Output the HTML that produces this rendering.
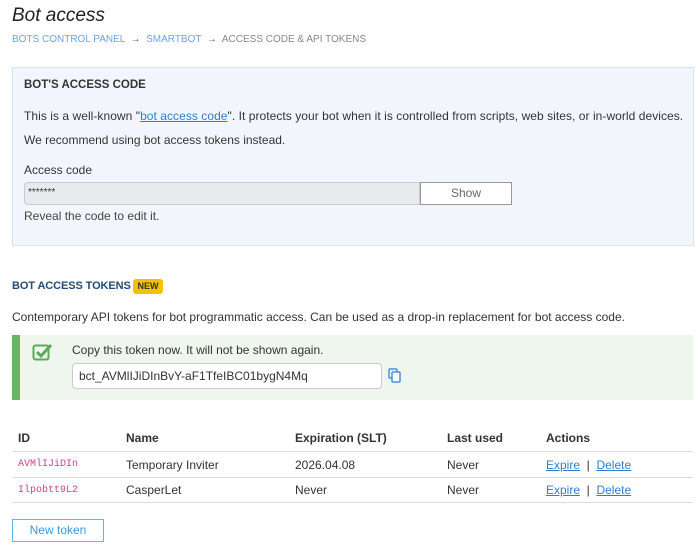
<!DOCTYPE html>
<html><head><style>
body{margin:0;width:700px;height:560px;background:#fff;font-family:"Liberation Sans",sans-serif;color:#333;font-size:12px;position:relative;overflow:hidden}
.a{position:absolute;white-space:nowrap}
a{color:#2a7fd4;text-decoration:underline}
.bc{font-size:10px;color:#6fa3dc}
</style></head><body>
<div class="a" style="left:12px;top:5px;font-size:19px;font-style:italic;color:#222">Bot access</div>
<div class="a bc" style="left:12px;top:34px">BOTS CONTROL PANEL <span style="color:#555">&nbsp;→&nbsp;</span> SMARTBOT <span style="color:#555">&nbsp;→&nbsp;</span> <span style="color:#888">ACCESS CODE &amp; API TOKENS</span></div>

<div class="a" style="left:12px;top:67px;width:680px;height:177px;background:#f2f6fc;border:1px solid #d4e5f5"></div>
<div class="a" style="left:24px;top:79px;font-weight:bold;font-size:11.5px;color:#333">BOT'S ACCESS CODE</div>
<div class="a" style="left:24px;top:109px;letter-spacing:0.05px">This is a well-known "<a>bot access code</a>". It protects your bot when it is controlled from scripts, web sites, or in-world devices.</div>
<div class="a" style="left:24px;top:133px">We recommend using bot access tokens instead.</div>
<div class="a" style="left:24px;top:163px;font-size:12px">Access code</div>
<div class="a" style="left:24px;top:182px;width:396px;background:#e8eaed;border:1px solid #c8cacc;border-radius:4px 0 0 4px;font-size:10px;line-height:20px;padding-left:3px;box-sizing:border-box;height:23px">*******</div>
<div class="a" style="left:420px;top:182px;width:92px;height:23px;box-sizing:border-box;background:#fff;border:1px solid #999;text-align:center;line-height:21px;font-size:12px;color:#666">Show</div>
<div class="a" style="left:24px;top:209px;font-size:12px;color:#444">Reveal the code to edit it.</div>

<div class="a" style="left:12px;top:280px;font-weight:bold;font-size:11px;color:#234a78;letter-spacing:-0.1px">BOT ACCESS TOKENS</div>
<div class="a" style="left:133px;top:279px;width:30px;height:15px;background:#f6c000;border-radius:3px;font-size:9px;font-weight:bold;text-align:center;line-height:15px;color:#333">NEW</div>
<div class="a" style="left:12px;top:310px">Contemporary API tokens for bot programmatic access. Can be used as a drop-in replacement for bot access code.</div>

<div class="a" style="left:12px;top:335px;width:681px;height:65px;background:#eef6ee;border-left:8px solid #6ab46a;box-sizing:border-box"></div>
<svg class="a" style="left:32px;top:342px" width="22" height="20" viewBox="0 0 22 20"><rect x="1.5" y="3.5" width="15" height="14" rx="2" fill="none" stroke="#5aaa5a" stroke-width="2"/><path d="M5 10l4 4 10-11" fill="none" stroke="#5aaa5a" stroke-width="3"/></svg>
<div class="a" style="left:72px;top:343px">Copy this token now. It will not be shown again.</div>
<div class="a" style="left:72px;top:363px;width:310px;height:26px;box-sizing:border-box;background:#fff;border:1px solid #ccc;border-radius:4px;padding-left:6px;line-height:24px;font-size:12px">bct_AVMlIJiDInBvY-aF1TfeIBC01bygN4Mq</div>
<svg class="a" style="left:388px;top:368px" width="13" height="15" viewBox="0 0 13 15"><rect x="1" y="1" width="8" height="9" rx="1" fill="none" stroke="#4a90d9" stroke-width="1.5"/><rect x="4" y="4" width="8" height="10" rx="1" fill="#fff" stroke="#4a90d9" stroke-width="1.5"/></svg>

<div class="a" style="left:12px;top:451px;width:681px;border-top:1px solid #ddd"></div>
<div class="a" style="left:12px;top:477px;width:681px;border-top:1px solid #ddd"></div>
<div class="a" style="left:12px;top:502px;width:681px;border-top:1px solid #ddd"></div>
<div class="a" style="left:18px;top:431px;font-weight:bold;font-size:12px">ID</div>
<div class="a" style="left:126px;top:431px;font-weight:bold;font-size:12px">Name</div>
<div class="a" style="left:295px;top:431px;font-weight:bold;font-size:12px">Expiration (SLT)</div>
<div class="a" style="left:447px;top:431px;font-weight:bold;font-size:12px">Last used</div>
<div class="a" style="left:546px;top:431px;font-weight:bold;font-size:12px">Actions</div>
<div class="a" style="left:18px;top:459px;font-family:'Liberation Mono',monospace;font-size:10px;color:#d0408a">AVMlIJiDIn</div>
<div class="a" style="left:126px;top:458px">Temporary Inviter</div>
<div class="a" style="left:295px;top:458px">2026.04.08</div>
<div class="a" style="left:447px;top:458px">Never</div>
<div class="a" style="left:546px;top:458px"><a>Expire</a> &nbsp;| &nbsp;<a>Delete</a></div>
<div class="a" style="left:18px;top:485px;font-family:'Liberation Mono',monospace;font-size:10px;color:#d0408a">Ilpobtt9L2</div>
<div class="a" style="left:126px;top:483px">CasperLet</div>
<div class="a" style="left:295px;top:483px">Never</div>
<div class="a" style="left:447px;top:483px">Never</div>
<div class="a" style="left:546px;top:483px"><a>Expire</a> &nbsp;| &nbsp;<a>Delete</a></div>

<div class="a" style="left:12px;top:519px;width:92px;height:23px;box-sizing:border-box;border:1px solid #5bb8f0;color:#3a9ae0;text-align:center;line-height:21px;font-size:12px">New token</div>
</body></html>
